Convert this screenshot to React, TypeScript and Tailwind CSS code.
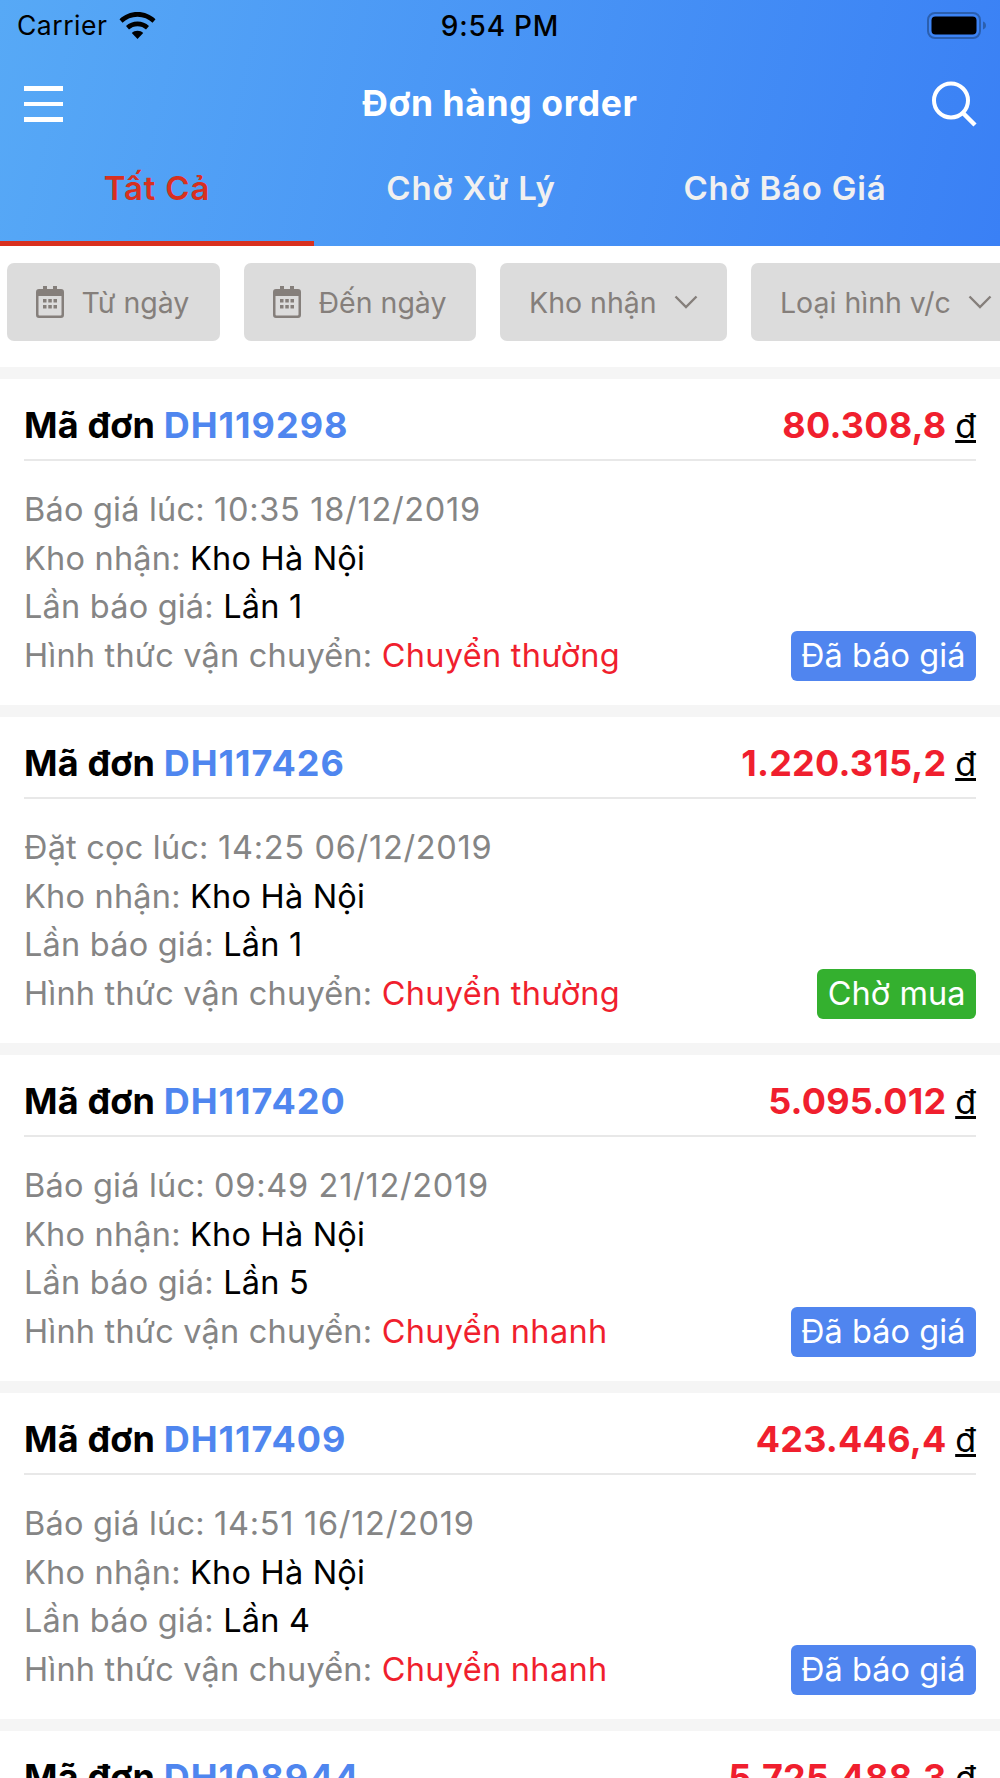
import React from "react";

type Order = { id: string; price: string; label: string; stamp: string; times: string; ship: string; status: string };

const orders: Order[] = [
  { id: "DH119298", price: "80.308,8", label: "Báo giá lúc:", stamp: "10:35 18/12/2019", times: "Lần 1", ship: "Chuyển thường", status: "Đã báo giá" },
  { id: "DH117426", price: "1.220.315,2", label: "Đặt cọc lúc:", stamp: "14:25 06/12/2019", times: "Lần 1", ship: "Chuyển thường", status: "Chờ mua" },
  { id: "DH117420", price: "5.095.012", label: "Báo giá lúc:", stamp: "09:49 21/12/2019", times: "Lần 5", ship: "Chuyển nhanh", status: "Đã báo giá" },
  { id: "DH117409", price: "423.446,4", label: "Báo giá lúc:", stamp: "14:51 16/12/2019", times: "Lần 4", ship: "Chuyển nhanh", status: "Đã báo giá" },
  { id: "DH108944", price: "5.725.488,3", label: "Báo giá lúc:", stamp: "14:51 16/12/2019", times: "Lần 1", ship: "Chuyển nhanh", status: "Đã báo giá" },
];

function Calendar() {
  return (
    <svg width="28" height="32" viewBox="0 0 28 32" className="shrink-0">
      <path
        fillRule="evenodd"
        fill="#857f7b"
        d="M7 0h4v3h6V0h4v3h4a3 3 0 0 1 3 3v23a3 3 0 0 1-3 3H3a3 3 0 0 1-3-3V6a3 3 0 0 1 3-3h4V0zM2.500 10v18.500a1 1 0 0 0 1 1h21a1 1 0 0 0 1-1V10h-25z"
      />
      <path fill="#857f7b" d="M7 13h3.500v3.500H7zM12.300 13h3.500v3.500h-3.500zM17.500 13H21v3.500h-3.500zM7 19h3.500v3.500H7zM12.300 19h3.500v3.500h-3.500zM17.500 19H21v3.500h-3.500z" />
    </svg>
  );
}

function Chevron() {
  return (
    <svg width="24" height="14" viewBox="0 0 24 14" className="shrink-0">
      <path d="M1.500 1.500 12 12 22.500 1.500" fill="none" stroke="#857f7b" strokeWidth="2.400" />
    </svg>
  );
}

function DateChip({ label, width }: { label: string; width: string }) {
  return (
    <div className={`${width} h-[78px] shrink-0 rounded-[7px] bg-[#dcdcdc] flex items-center pl-[29px] gap-[17.500px] text-[28.500px] text-[#857f7b]`}>
      <Calendar />
      <span className="whitespace-nowrap pt-[2px]">{label}</span>
    </div>
  );
}

function SelectChip({ label, width }: { label: string; width: string }) {
  return (
    <div className={`${width} pl-[29px] h-[78px] shrink-0 rounded-[7px] bg-[#dcdcdc] flex items-center gap-[17px] text-[28.500px] text-[#857f7b]`}>
      <span className="whitespace-nowrap pt-[2px]">{label}</span>
      <Chevron />
    </div>
  );
}

function Card({ o }: { o: Order }) {
  const green = o.status === "Chờ mua";
  return (
    <div className="bg-white h-[326px] px-[24px] shrink-0">
      <div className="h-[82px] flex items-center justify-between border-b-2 border-[#e8e8e8] pt-[12px]">
        <div className="text-[36px] font-[650] text-black tracking-[0.150px] whitespace-nowrap">
          Mã đơn <span className="text-[#4f86ef] tracking-[1px]">{o.id}</span>
        </div>
        <div className="text-[36px] font-[650] text-[#f01f2e] tracking-[0.200px] whitespace-nowrap">
          {o.price} <span className="text-[34px] font-normal text-black underline tracking-normal">đ</span>
        </div>
      </div>
      <div className="pt-[25px] text-[32.500px] tracking-[0.200px] leading-[48.500px] text-[#858585] relative">
        <div>
          {o.label} <span className="tracking-[0.700px]">{o.stamp}</span>
        </div>
        <div>
          Kho nhận: <span className="text-black">Kho Hà Nội</span>
        </div>
        <div>
          Lần báo giá: <span className="text-black">{o.times}</span>
        </div>
        <div>
          Hình thức vận chuyển: <span className="text-[#f01f2e] tracking-[0.300px]">{o.ship}</span>
        </div>
        <div
          className={`absolute right-0 bottom-[-1px] h-[50px] px-[10.500px] rounded-[6px] flex items-center text-white text-[32.500px] tracking-[0.050px] whitespace-nowrap ${
            green ? "bg-[#34b02f]" : "bg-[#5085ef]"
          }`}
        >
          {o.status}
        </div>
      </div>
    </div>
  );
}

export default function App() {
  return (
    <div className="w-[1000px] h-[1778px] overflow-hidden bg-[#f5f5f5] flex flex-col font-['Inter','Liberation_Sans',sans-serif]">
      <header className="h-[246px] shrink-0 bg-[linear-gradient(104deg,#57a9f6,#3a80f5)] flex flex-col">
        <div className="h-[52px] px-[17px] flex items-center justify-between text-black relative">
          <div className="flex items-center gap-[12px] text-[26.500px] tracking-[0.5px]">
            <span>Carrier</span>
            <svg width="37" height="28" viewBox="0 0 37 28">
              <path d="M18.500 0C11.500 0 5.300 2.700 0.500 7.200L3.500 10.800C7.500 7 12.700 4.800 18.500 4.800S29.500 7 33.500 10.800L36.500 7.200C31.700 2.700 25.500 0 18.500 0z" fill="#000" />
              <path d="M18.500 9.500C14 9.500 10.100 11.200 7 14L10 17.600C12.300 15.500 15.200 14.300 18.500 14.300S24.700 15.500 27 17.600L30 14C26.900 11.200 23 9.500 18.500 9.500z" fill="#000" />
              <path d="M18.500 18.800C16.300 18.800 14.300 19.600 12.800 21L18.500 27 24.200 21C22.700 19.600 20.700 18.800 18.500 18.800z" fill="#000" />
            </svg>
          </div>
          <span className="absolute left-0 right-0 text-center text-[28px] tracking-[0.8px] font-medium">9:54 PM</span>
          <svg width="60" height="28" viewBox="0 0 60 28" className="mr-[-4px]">
            <rect x="1" y="1" width="52" height="25" rx="7" fill="none" stroke="#2b5fae" strokeWidth="2" />
            <rect x="4.500" y="4.500" width="45" height="18" rx="4" fill="#000" />
            <path d="M56 9.500c1.800.6 3 2.200 3 4s-1.200 3.400-3 4z" fill="#2b5fae" />
          </svg>
        </div>
        <div className="h-[50px] mt-[27px] px-[24px] flex items-center justify-between relative text-white">
          <div className="flex flex-col gap-[11px]">
            <div className="w-[39px] h-[4.500px] bg-white" />
            <div className="w-[39px] h-[4.500px] bg-white" />
            <div className="w-[39px] h-[4.500px] bg-white" />
          </div>
          <span className="absolute left-0 right-0 text-center text-[35.500px] tracking-[0.600px] font-[650]">Đơn hàng order</span>
          <svg width="46" height="46" viewBox="0 0 46 46" className="mr-[-1px] mt-[-1px]">
            <circle cx="20" cy="19.500" r="17" fill="none" stroke="#fff" strokeWidth="4" />
            <path d="M32 32 L44 44" stroke="#fff" strokeWidth="4.500" />
          </svg>
        </div>
        <div className="flex-1 flex mt-[7px] text-[33px] tracking-[0.800px] font-semibold">
          <div className="w-[314px] relative flex items-center justify-center text-[#d8301f] pb-[5px]">
            Tất Cả
            <div className="absolute left-0 right-0 bottom-0 h-[5px] bg-[#d8301f]" />
          </div>
          <div className="w-[314px] flex items-center justify-center text-[#f0f0f0] pb-[5px]">Chờ Xử Lý</div>
          <div className="w-[314px] flex items-center justify-center text-[#f0f0f0] pb-[5px]">Chờ Báo Giá</div>
        </div>
      </header>

      <div className="h-[121px] shrink-0 bg-white pt-[17px] pl-[7px] flex gap-[24px] overflow-hidden">
        <DateChip label="Từ ngày" width="w-[213px]" />
        <DateChip label="Đến ngày" width="w-[232px]" />
        <SelectChip label="Kho nhận" width="w-[227px]" />
        <SelectChip label="Loại hình v/c" width="w-[300px]" />
      </div>

      <div className="flex flex-col gap-[12px] pt-[12px]">
        {orders.map((o) => (
          <Card key={o.id} o={o} />
        ))}
      </div>
    </div>
  );
}
